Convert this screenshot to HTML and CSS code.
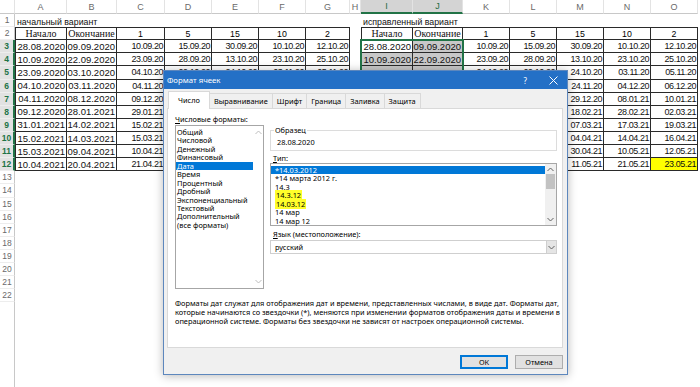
FILE: index.html
```html
<!DOCTYPE html>
<html lang="ru">
<head>
<meta charset="utf-8">
<title>Формат ячеек</title>
<link rel="stylesheet" href="styles.css">
</head>
<body>
<div class="sheet">
  <div class="ch corner"></div>
  <div class="ch">A</div><div class="ch">B</div><div class="ch">C</div><div class="ch">D</div><div class="ch">E</div><div class="ch">F</div><div class="ch">G</div><div class="ch">H</div><div class="ch sel">I</div><div class="ch sel">J</div><div class="ch">K</div><div class="ch">L</div><div class="ch">M</div><div class="ch">N</div><div class="ch">O</div>

  <div class="rh">1</div><div class="c title1 spanL">начальный вариант</div><div class="c title1 spanR">исправленный вариант</div>

  <div class="rh">2</div>
  <div class="c t tt tl hd">Начало</div><div class="c t tt hd">Окончание</div><div class="c t tt n">1</div><div class="c t tt n">5</div><div class="c t tt n">15</div><div class="c t tt n">10</div><div class="c t tt n">2</div><div class="c"></div>
  <div class="c t tt tl hd">Начало</div><div class="c t tt hd">Окончание</div><div class="c t tt n">1</div><div class="c t tt n">5</div><div class="c t tt n">15</div><div class="c t tt n">10</div><div class="c t tt n">2</div>

  <div class="rh sel">3</div>
  <div class="c t tl dl">28.08.2020</div><div class="c t dl">09.09.2020</div><div class="c t ds">10.09.20</div><div class="c t ds">15.09.20</div><div class="c t ds">30.09.20</div><div class="c t ds">10.10.20</div><div class="c t ds">12.10.20</div><div class="c"></div>
  <div class="c t tl dl">28.08.2020</div><div class="c t dl s">09.09.2020</div><div class="c t ds">10.09.20</div><div class="c t ds">15.09.20</div><div class="c t ds">30.09.20</div><div class="c t ds">10.10.20</div><div class="c t ds">12.10.20</div>

  <div class="rh sel">4</div>
  <div class="c t tl dl">10.09.2020</div><div class="c t dl">22.09.2020</div><div class="c t ds">23.09.20</div><div class="c t ds">28.09.20</div><div class="c t ds">13.10.20</div><div class="c t ds">23.10.20</div><div class="c t ds">25.10.20</div><div class="c"></div>
  <div class="c t tl dl s">10.09.2020</div><div class="c t dl s">22.09.2020</div><div class="c t ds">23.09.20</div><div class="c t ds">28.09.20</div><div class="c t ds">13.10.20</div><div class="c t ds">23.10.20</div><div class="c t ds">25.10.20</div>

  <div class="rh sel">5</div>
  <div class="c t tl dl">23.09.2020</div><div class="c t dl">03.10.2020</div><div class="c t ds">04.10.20</div><div class="c t ds">09.10.20</div><div class="c t ds">24.10.20</div><div class="c t ds">03.11.20</div><div class="c t ds">05.11.20</div><div class="c"></div>
  <div class="c t tl dl s">23.09.2020</div><div class="c t dl s">03.10.2020</div><div class="c t ds">04.10.20</div><div class="c t ds">09.10.20</div><div class="c t ds">24.10.20</div><div class="c t ds">03.11.20</div><div class="c t ds">05.11.20</div>

  <div class="rh sel">6</div>
  <div class="c t tl dl">04.10.2020</div><div class="c t dl">03.11.2020</div><div class="c t ds">04.11.20</div><div class="c t ds"></div><div class="c t ds"></div><div class="c t ds"></div><div class="c t ds"></div><div class="c"></div>
  <div class="c t tl dl s"></div><div class="c t dl s"></div><div class="c t ds"></div><div class="c t ds"></div><div class="c t ds">24.11.20</div><div class="c t ds">04.12.20</div><div class="c t ds">06.12.20</div>

  <div class="rh sel">7</div>
  <div class="c t tl dl">04.11.2020</div><div class="c t dl">08.12.2020</div><div class="c t ds">09.12.20</div><div class="c t ds"></div><div class="c t ds"></div><div class="c t ds"></div><div class="c t ds"></div><div class="c"></div>
  <div class="c t tl dl s"></div><div class="c t dl s"></div><div class="c t ds"></div><div class="c t ds"></div><div class="c t ds">29.12.20</div><div class="c t ds">08.01.21</div><div class="c t ds">10.01.21</div>

  <div class="rh sel">8</div>
  <div class="c t tl dl">09.12.2020</div><div class="c t dl">28.01.2021</div><div class="c t ds">29.01.21</div><div class="c t ds"></div><div class="c t ds"></div><div class="c t ds"></div><div class="c t ds"></div><div class="c"></div>
  <div class="c t tl dl s"></div><div class="c t dl s"></div><div class="c t ds"></div><div class="c t ds"></div><div class="c t ds">18.02.21</div><div class="c t ds">28.02.21</div><div class="c t ds">02.03.21</div>

  <div class="rh sel">9</div>
  <div class="c t tl dl">31.01.2021</div><div class="c t dl">14.02.2021</div><div class="c t ds">15.02.21</div><div class="c t ds"></div><div class="c t ds"></div><div class="c t ds"></div><div class="c t ds"></div><div class="c"></div>
  <div class="c t tl dl s"></div><div class="c t dl s"></div><div class="c t ds"></div><div class="c t ds"></div><div class="c t ds">07.03.21</div><div class="c t ds">17.03.21</div><div class="c t ds">19.03.21</div>

  <div class="rh sel">10</div>
  <div class="c t tl dl">15.02.2021</div><div class="c t dl">14.03.2021</div><div class="c t ds">15.03.21</div><div class="c t ds"></div><div class="c t ds"></div><div class="c t ds"></div><div class="c t ds"></div><div class="c"></div>
  <div class="c t tl dl s"></div><div class="c t dl s"></div><div class="c t ds"></div><div class="c t ds"></div><div class="c t ds">04.04.21</div><div class="c t ds">14.04.21</div><div class="c t ds">16.04.21</div>

  <div class="rh sel">11</div>
  <div class="c t tl dl">15.03.2021</div><div class="c t dl">09.04.2021</div><div class="c t ds">10.04.21</div><div class="c t ds"></div><div class="c t ds"></div><div class="c t ds"></div><div class="c t ds"></div><div class="c"></div>
  <div class="c t tl dl s"></div><div class="c t dl s"></div><div class="c t ds"></div><div class="c t ds"></div><div class="c t ds">30.04.21</div><div class="c t ds">10.05.21</div><div class="c t ds">12.05.21</div>

  <div class="rh sel">12</div>
  <div class="c t tl dl">10.04.2021</div><div class="c t dl">20.04.2021</div><div class="c t ds">21.04.21</div><div class="c t ds"></div><div class="c t ds"></div><div class="c t ds"></div><div class="c t ds"></div><div class="c"></div>
  <div class="c t tl dl s"></div><div class="c t dl s"></div><div class="c t ds"></div><div class="c t ds"></div><div class="c t ds">11.05.21</div><div class="c t ds">21.05.21</div><div class="c t ds hl">23.05.21</div>

  <div class="rh">13</div><div class="empty"></div>
  <div class="rh">14</div><div class="empty"></div>
  <div class="rh">15</div><div class="empty"></div>
  <div class="rh">16</div><div class="empty"></div>
  <div class="rh">17</div><div class="empty"></div>
  <div class="rh">18</div><div class="empty"></div>
  <div class="rh">19</div><div class="empty"></div>
  <div class="rh">20</div><div class="empty"></div>
  <div class="rh">21</div><div class="empty"></div>
  <div class="rh">22</div><div class="empty"></div>
  <div class="rh rest"></div><div class="empty"></div>

  <div class="selbox"></div>
</div>

<div class="dlg">
  <div class="tbar">
    <span class="ttl">Формат ячеек</span>
    <span class="help">?</span>
    <svg class="close" width="9" height="9" viewBox="0 0 9 9"><path d="M0.5 0.5 L8.5 8.5 M8.5 0.5 L0.5 8.5" stroke="#fff" stroke-width="1" fill="none"/></svg>
  </div>
  <div class="tabs">
    <div class="tab on">Число</div>
    <div class="tab">Выравнивание</div>
    <div class="tab">Шрифт</div>
    <div class="tab">Граница</div>
    <div class="tab">Заливка</div>
    <div class="tab">Защита</div>
  </div>
  <div class="panel">
    <div class="lcol">
      <div class="lbl"><u>Ч</u>исловые форматы:</div>
      <div class="lb cat">
        <div class="items">
          <div class="it">Общий</div>
          <div class="it">Числовой</div>
          <div class="it">Денежный</div>
          <div class="it">Финансовый</div>
          <div class="it on">Дата</div>
          <div class="it">Время</div>
          <div class="it">Процентный</div>
          <div class="it">Дробный</div>
          <div class="it">Экспоненциальный</div>
          <div class="it">Текстовый</div>
          <div class="it">Дополнительный</div>
          <div class="it">(все форматы)</div>
        </div>
        <div class="vs">
          <svg class="chev" width="7" height="5" viewBox="0 0 7 5"><polyline points="0.5,4 3.5,1 6.5,4" fill="none" stroke="#bdbdbd" stroke-width="1"/></svg>
          <svg class="chev" width="7" height="5" viewBox="0 0 7 5"><polyline points="0.5,1 3.5,4 6.5,1" fill="none" stroke="#bdbdbd" stroke-width="1"/></svg>
        </div>
      </div>
    </div>
    <div class="rcol">
      <fieldset class="grp">
        <legend>Образец</legend>
        <div class="sample">28.08.2020</div>
      </fieldset>
      <div class="lbl lbl-type"><u>Т</u>ип:</div>
      <div class="lb typ">
        <div class="items">
          <div class="it on">*14.03.2012</div>
          <div class="it">*14 марта 2012 г.</div>
          <div class="it">14.3</div>
          <div class="it"><span class="mark">14.3.12</span></div>
          <div class="it"><span class="mark">14.03.12</span></div>
          <div class="it">14 мар</div>
          <div class="it">14 мар 12</div>
        </div>
        <div class="vs vs-typ">
          <svg class="chev" width="7" height="5" viewBox="0 0 7 5"><polyline points="0.5,4 3.5,1 6.5,4" fill="none" stroke="#606060" stroke-width="1"/></svg>
          <div class="thumb"></div>
          <div class="track"></div>
          <svg class="chev" width="7" height="5" viewBox="0 0 7 5"><polyline points="0.5,1 3.5,4 6.5,1" fill="none" stroke="#606060" stroke-width="1"/></svg>
        </div>
      </div>
      <div class="lbl lbl-lang"><u>Я</u>зык (местоположение):</div>
      <div class="combo">
        <span class="cv">русский</span>
        <span class="cbtn"><svg width="7" height="5" viewBox="0 0 7 5"><polyline points="0.5,1 3.5,4 6.5,1" fill="none" stroke="#606060" stroke-width="1"/></svg></span>
      </div>
    </div>
    <p class="desc">Форматы дат служат для отображения дат и времени, представленных числами, в виде дат. Форматы дат,<br>которые начинаются со звездочки (*), меняются при изменении форматов отображения даты и времени в<br>операционной системе. Форматы без звездочки не зависят от настроек операционной системы.</p>
  </div>
  <div class="foot">
    <button class="btn ok">ОК</button>
    <button class="btn">Отмена</button>
  </div>
</div>
</body>
</html>
```

FILE: styles.css
```css
* { box-sizing: border-box; margin: 0; padding: 0; }
html, body { width: 700px; height: 387px; overflow: hidden; background: #fff; }
body { position: relative; font-family: "Liberation Sans", Arial, sans-serif; color: #000; }

/* ---------- spreadsheet ---------- */
.sheet {
  position: relative;
  display: grid;
  grid-template-columns: 15px 52px 50px 48px 47px 47px 47px 44px 11px 52px 50px 47px 47px 47px 47px 47px;
  grid-template-rows: 14px repeat(22, 13.12px) 1fr;
  width: 700px;
  height: 387px;
}
.ch {
  background: #fff;
  border-right: 1px solid #e3e3e3;
  border-bottom: 1px solid #c8c8c8;
  color: #6a6a6a;
  font-size: 9px;
  display: flex;
  align-items: center;
  justify-content: center;
}
.ch.sel { background: #d4d4d4; color: #1d6b3f; border-bottom: 2px solid #217346; }
.rh {
  border-right: 1px solid #c8c8c8;
  border-bottom: 1px solid #ededed;
  color: #6a6a6a;
  font-size: 8.5px;
  display: flex;
  align-items: center;
  justify-content: center;
}
.rh.sel { background: #e2e2e2; color: #217346; border-right: 2px solid #217346; font-weight: bold; }
.rh.rest { border-bottom: none; }
.empty { grid-column: 2 / -1; }

.c {
  display: flex;
  align-items: center;
  white-space: nowrap;
  font-size: 9px;
  padding: 0 2px;
}
.title1 { font-size: 8.8px; color: #111; padding-top: 2px; }
.spanL { grid-column: 2 / 10; }
.spanR { grid-column: 10 / -1; }

.t { border-right: 1px solid #2a2a2a; border-bottom: 1px solid #2a2a2a; }
.tt { border-top: 1px solid #2a2a2a; }
.tl { border-left: 1px solid #2a2a2a; }

.hd { font-family: "Liberation Serif", "Times New Roman", serif; font-size: 10px; justify-content: center; color: #111; padding: 0; }
.n { justify-content: center; font-size: 8.8px; }
.dl { justify-content: flex-end; font-size: 9.5px; padding: 0 1px 0 0; color: #111; }
.ds { justify-content: flex-end; font-size: 9px; letter-spacing: -0.45px; padding: 0 1px 0 0; color: #111; }
.s { background: #c8c8c8; }
.hl { background: #ffff00; }

.selbox {
  position: absolute;
  grid-column: 10 / 12;
  grid-row: 4 / 14;
  top: -1px;
  left: -1px;
  right: -1px;
  bottom: -1px;
  border: 2px solid #217346;
  pointer-events: none;
  z-index: 2;
}

/* ---------- dialog ---------- */
.dlg {
  position: absolute;
  left: 163px;
  top: 70px;
  width: 405px;
  height: 305px;
  background: #f0f0f0;
  border: 1px solid #5d87bd;
  box-shadow: 0 1px 9px rgba(0, 0, 0, 0.28);
  z-index: 10;
  display: flex;
  flex-direction: column;
  font-family: "Noto Sans", "Liberation Sans", sans-serif;
  font-size: 7.4px;
  color: #000;
}
.tbar {
  height: 18px;
  flex: none;
  background: #2470c6;
  color: #fff;
  display: flex;
  align-items: center;
  padding: 0 9px 0 3px;
}
.ttl { flex: 1; font-size: 7.8px; }
.help { font-size: 8px; margin-right: 22px; }
.close { display: block; }

.tabs {
  height: 19px;
  flex: none;
  display: flex;
  align-items: flex-end;
  padding-left: 4px;
  position: relative;
  z-index: 1;
}
.tab {
  height: 15px;
  line-height: 14px;
  padding: 0 4px;
  border: 1px solid #d9d9d9;
  border-bottom: none;
  margin-right: -1px;
  background: #f0f0f0;
  white-space: nowrap;
}
.tab.on {
  line-height: 16px;
  background: #fff;
  padding: 0 9px;
  margin-bottom: -1px;
  height: 18px;
}

.panel {
  height: 240px;
  flex: none;
  margin: 0 4px 0 3px;
  background: #fff;
  border: 1px solid #d9d9d9;
  padding: 6px 5px 0 7px;
  display: grid;
  grid-template-columns: 89px 1fr;
  column-gap: 6px;
  align-content: start;
}
.lbl { line-height: 9px; height: 9px; white-space: nowrap; }
.lbl u { text-decoration: underline; }

.lb {
  border: 1px solid #a6a6a6;
  background: #fff;
  display: flex;
}
.lb .items { flex: 1; padding-top: 2px; }
.it { line-height: 8.45px; height: 8.45px; padding-left: 1px; white-space: nowrap; }
.it.on { background: #0078d7; color: #fff; }
.cat { margin-top: 1px; height: 164px; }
.vs {
  width: 10px;
  display: flex;
  flex-direction: column;
  align-items: center;
  justify-content: space-between;
  padding: 4px 0 4px;
}
.chev { display: block; }

.rcol { display: flex; flex-direction: column; }
.grp {
  margin-top: 11px;
  border: 1px solid #dcdcdc;
  padding: 3px 4px 3px 3px;
  min-width: 0;
}
.grp legend { padding: 0 1px; line-height: 9px; }
.sample { line-height: 9px; padding-left: 3px; }
.lbl-type { margin-top: 3px; padding-left: 3px; }
.typ { height: 63px; margin-top: 0; }
.typ .items { padding-top: 2px; }
.typ .it { padding-left: 4px; }
.vs-typ {
  background: #f0f0f0;
  width: 11px;
  padding: 3px 0 3px;
  justify-content: flex-start;
}
.vs-typ .thumb { width: 9px; height: 15px; background: #c2c2c2; margin-top: 2px; }
.vs-typ .track { flex: 1; }
.mark { background: #ffff2a; padding: 0 1px; }
.lbl-lang { margin-top: 4px; padding-left: 3px; }
.combo {
  margin-top: 1px;
  height: 14px;
  border: 1px solid #cfcfcf;
  display: flex;
  align-items: center;
  background: #fff;
}
.cv { flex: 1; padding-left: 4px; }
.cbtn {
  width: 10px;
  height: 12px;
  background: #e5e5e5;
  border-left: 1px solid #cfcfcf;
  display: flex;
  align-items: center;
  justify-content: center;
}
.cbtn svg { display: block; }

.desc {
  grid-column: 1 / -1;
  margin-top: 10px;
  line-height: 9px;
  white-space: nowrap;
}

.foot {
  flex: 1;
  display: flex;
  justify-content: flex-end;
  align-items: flex-start;
  gap: 7px;
  padding: 7px 4px 0 0;
}
.btn {
  width: 48px;
  height: 14px;
  background: #e1e1e1;
  border: 1px solid #adadad;
  font-family: inherit;
  font-size: 7.4px;
  color: #000;
}
.btn.ok { border: 1px solid #0078d7; box-shadow: inset 0 0 0 1px #0078d7; }
```
